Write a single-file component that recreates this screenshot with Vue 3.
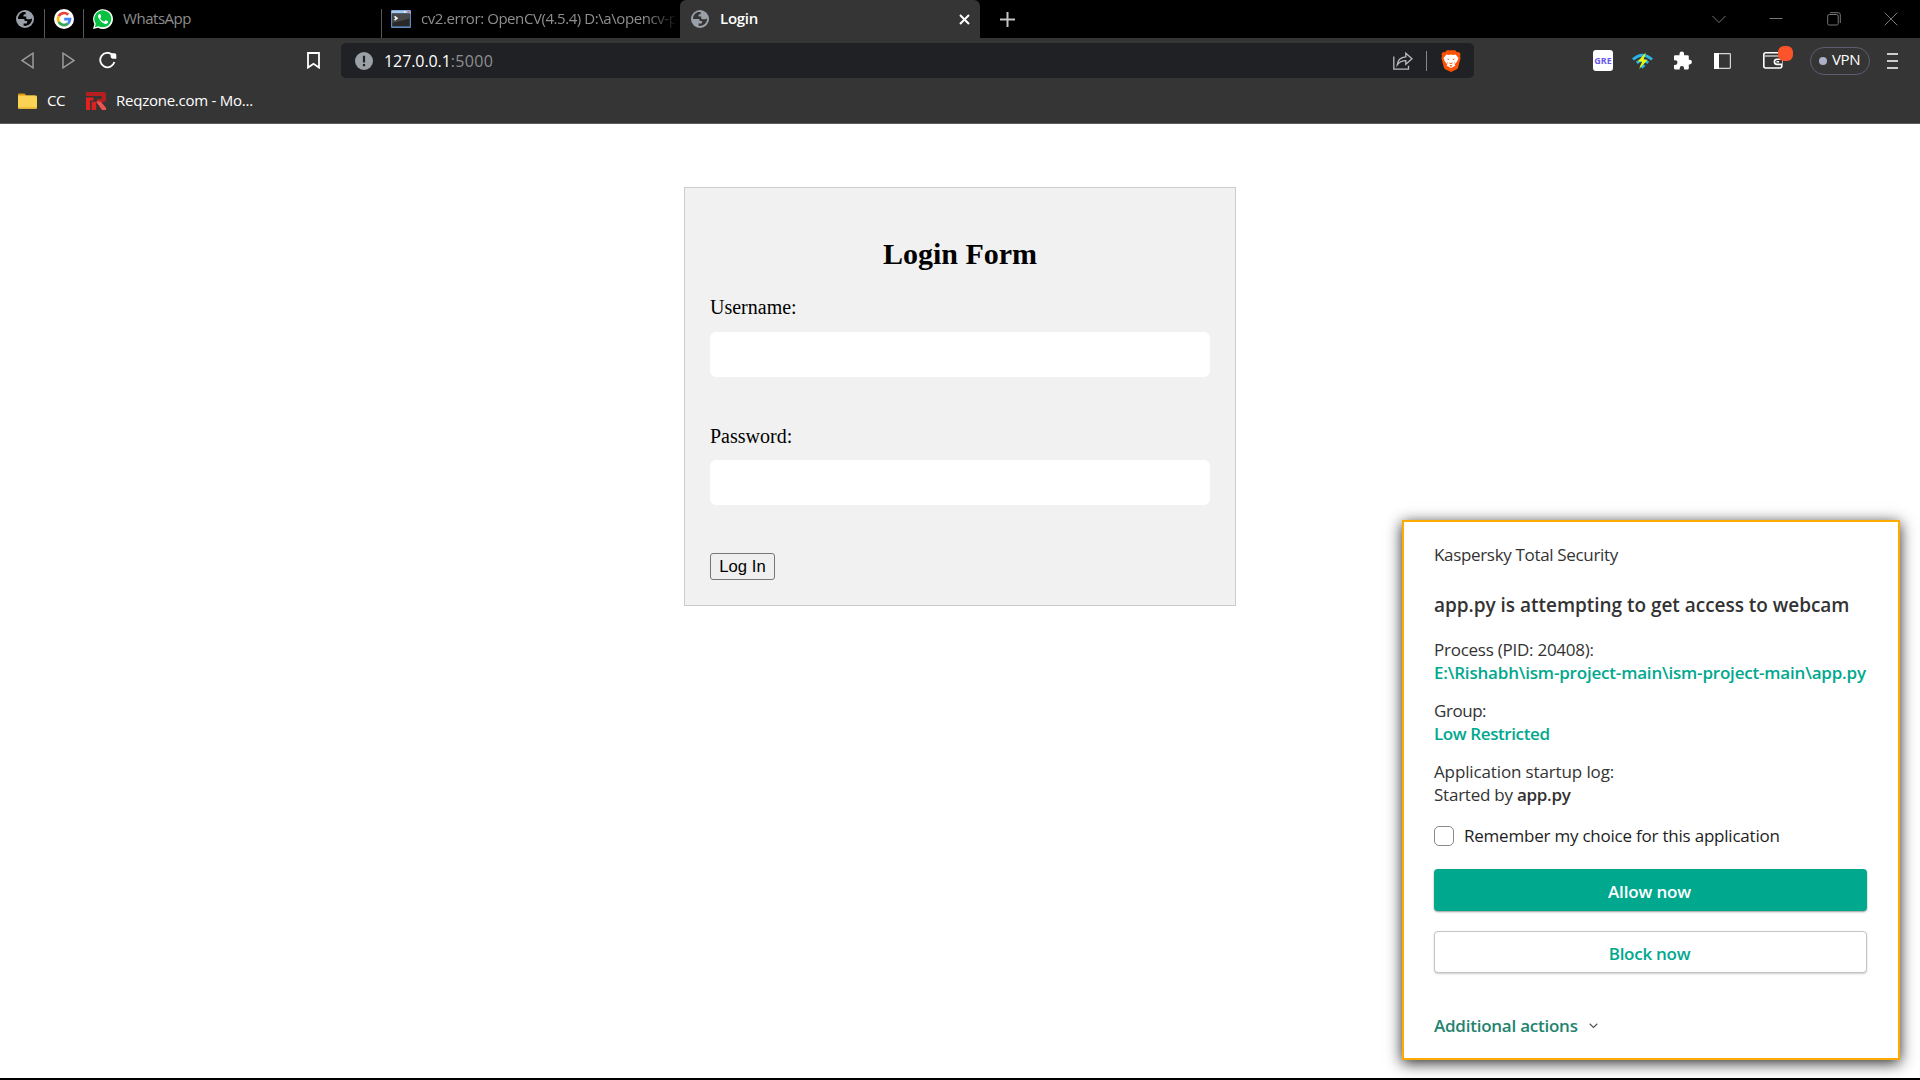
<script setup>
import { ref } from 'vue'

const username = ref('')
const password = ref('')
const remember = ref(false)
</script>

<template>
  <div class="screen">
    <svg class="defs" width="0" height="0" aria-hidden="true">
      <symbol id="globe" viewBox="0 0 18 18">
        <circle cx="9" cy="9" r="9" fill="#9aa0a9" />
        <path d="M7.400 2.100C4.200 2.800 2 5.600 2 8.900h5.200c1 0 1.400.5 1.400 1.300 0 .7.4.9 1.300.9h1.200v1.200c0 .8-.5 1.200-1.200 1.200H7.600v2.300c3.100.6 6.200-.8 7.600-3.700.7-1.400.9-2.700.7-4.200-.5 1-1.200 1.400-2.400 1.400h-1.800c-1 0-1.500-.5-1.500-1.500V6.500H7.500V5.400c0-.8.4-1.200 1.200-1.200h1V2.200c-.8-.2-1.500-.2-2.300-.1z" />
      </symbol>
    </svg>

    <header class="browser">
      <div class="tabs">
        <svg class="globe pin-globe"><use href="#globe" /></svg>
        <i class="divider d1"></i>
        <svg class="google" viewBox="0 0 20 20">
          <circle cx="10" cy="10" r="10" fill="#fff" />
          <g fill="none" stroke-width="2.7">
            <path d="M14.200 5.700A6 6 0 0 0 4.700 7.200" stroke="#ea4335" />
            <path d="M4.700 7.200A6 6 0 0 0 4.700 12.800" stroke="#fbbc05" />
            <path d="M4.700 12.800A6 6 0 0 0 13.900 14.600" stroke="#34a853" />
            <path d="M13.900 14.600A6 6 0 0 0 16 10.200H10.200" stroke="#4285f4" />
          </g>
        </svg>
        <i class="divider d2"></i>
        <svg class="whatsapp" viewBox="0 0 20 20">
          <path d="M0 20 1.400 14.900A9.900 9.900 0 1 1 5.200 18.700z" fill="#fff" />
          <path d="m1.800 18.200 1-3.500A8.500 8.500 0 1 1 5.500 17.200z" fill="#08c143" />
          <path d="M7.400 5.300c-.3-.5-.7-.5-1.100-.3-1.300 1-1.500 2.400-.7 4 1.300 2.700 3.300 4.600 6 5.700 1.500.5 2.900-.1 3.400-1.300.2-.5.200-.9-.2-1.100l-1.800-.9c-.4-.2-.6-.1-.8.2l-.7.900c-.2.2-.4.200-.7.100-1.600-.7-2.700-1.700-3.500-3.200-.1-.2-.1-.4.100-.6l.6-.8c.1-.2.100-.4 0-.7z" fill="#fff" />
        </svg>
        <span class="tab-title t-wa">WhatsApp</span>
        <i class="divider"></i>
        <svg class="console" viewBox="0 0 20 18">
          <rect width="20" height="18" rx="1" fill="#5f88c0" />
          <rect x=".5" y=".5" width="19" height="3" fill="#a9c9ef" />
          <path d="M13 1h1.500v1.500H13z" fill="#fff" /><path d="M16.500 1h2v1.500h-2z" fill="#e05a4a" />
          <rect x="1.200" y="3.600" width="17.600" height="12.800" fill="#292929" />
          <path d="M1.200 3.600h17.600v5L1.200 13z" fill="#484848" />
          <path d="m3.500 6.300 2.500 1.900-2.500 1.900" fill="none" stroke="#fff" stroke-width="1.500" />
        </svg>
        <span class="tab-title t-cv">cv2.error: OpenCV(4.5.4) D:\a\opencv-p</span>
        <div class="active-tab">
          <svg class="globe"><use href="#globe" /></svg>
          <span class="t-login">Login</span>
          <svg class="tab-close" viewBox="0 0 11 11"><path d="m1 1 9 9M10 1 1 10" stroke="#fff" stroke-width="2" /></svg>
        </div>
        <svg class="plus" viewBox="0 0 15 15"><path d="M7.500 0v15M0 7.500h15" stroke="#c4c4c4" stroke-width="2" /></svg>
        <div class="window-controls">
          <svg width="14" height="14" viewBox="0 0 14 14"><path d="m.5 4 6.500 6.500L13.500 4" /></svg>
          <svg width="14" height="14" viewBox="0 0 14 14"><path d="M.5 6.500h13" /></svg>
          <svg width="14" height="14" viewBox="0 0 14 14"><rect x=".7" y="2.500" width="10.500" height="10.500" rx="1.500" /><path d="M3 .7h8.300q2 0 2 2V11" /></svg>
          <svg width="14" height="14" viewBox="0 0 14 14"><path d="m.7.7 12.600 12.600M13.300.7.7 13.300" /></svg>
        </div>
      </div>

      <div class="toolbar">
        <svg class="back" viewBox="0 0 13 17"><path d="M12 1.200v14.600L.9 8.500z" /></svg>
        <svg class="forward" viewBox="0 0 13 17"><path d="M1 1.200v14.600l11.100-7.300z" /></svg>
        <svg class="reload" viewBox="0 0 18 17"><path d="M13.400 2.800A7.200 7.200 0 1 0 15.400 10" fill="none" stroke="#fff" stroke-width="1.800" /><path d="M11.600 1.200h4q1.700 0 1.700 1.700v3.800h-3.500q-2.200-.3-2.200-2.300z" fill="#fff" /></svg>
        <svg class="bookmark" viewBox="0 0 13 17"><path d="M1 1h11v14.600l-5.500-3.800L1 15.600z" fill="none" stroke="#fff" stroke-width="1.800" /></svg>
        <div class="address">
          <svg class="info" viewBox="0 0 18 18"><circle cx="9" cy="9" r="9" fill="#9aa0a6" /><path d="M7.900 3.800h2.200v6.700H7.900zM7.900 12h2.200v2.200H7.900z" fill="#202124" /></svg>
          <span class="host">127.0.0.1</span><span class="port">:5000</span>
          <svg class="share" viewBox="0 0 20 18"><g fill="none" stroke="#b9babc" stroke-width="1.300"><path d="M.8 4.500v12.700h14.700v-3.500" /><path d="M4.200 13c.4-4.700 3.200-7.700 8.600-8.100V1.200L19 6.700l-6.200 5.500V8.700C9 8.700 6.500 9.700 4.200 13z" /></g></svg>
          <i class="address-sep"></i>
          <svg class="brave" viewBox="0 0 20 22">
            <path d="M5.800.2h8.400l1.900 2 2-.2 1.500 2.300-.6 1.800.6 2-2.500 9.400q-.4 1.200-1.300 1.800L10 22l-5.800-2.700Q3.300 18.700 2.900 17.500L.4 8.100l.6-2-.6-1.800L1.900 2l2 .2z" fill="#fb5206" />
            <path d="M5.500 4.600 8 5l2-.5 2 .5 2.500-.4 3 3.500-1.400 3.500-2.400 2.600.6 1.500L10 18l-4.300-2.300.6-1.500-2.400-2.600-1.400-3.500z" fill="#fff" />
            <path d="m5.400 8.600 3.100.4-.6 1.100zM14.600 8.600l-3.100.4.600 1.100zM8.200 12.300l1.800.9 1.800-.9-.4 1.200-1.400.7-1.400-.7zM8.300 15.700l1.700-.8 1.700.8-1.700 1zM6.300 11.600l1 2.200-.9-.5zM13.700 11.600l-1 2.200.9-.5z" fill="#fb5206" />
          </svg>
        </div>
        <span class="gre">GRE</span>
        <svg class="wifi" viewBox="0 0 22 18">
          <path d="M1 7.500Q11-1.700 21 7.500M5 11Q11 5.500 17 11" fill="none" stroke="#2bb5e6" stroke-width="3" /><path d="M8 14q3-3 6 0l-3 3.200z" fill="#2bb5e6" />
          <path d="M14.500 0 6 9.400h4.600L7.500 17.500l9-9.700h-4.300z" fill="#eaf50c" />
        </svg>
        <svg class="puzzle" viewBox="0 0 18 19"><path d="M1.200 4.200h4.300V2.800a2.300 2.300 0 0 1 4.600 0v1.400h3.500q1.200 0 1.200 1.200v3.400h.8a2.300 2.300 0 0 1 0 4.600h-.8v3.900q0 1.200-1.200 1.200h-3.500v-1.200a2.200 2.200 0 0 0-4.400 0v1.200H1.200Q0 18.500 0 17.300v-3.400h1.200a2.300 2.300 0 0 0 0-4.600H0V5.400q0-1.200 1.200-1.200z" fill="#fff" /></svg>
        <svg class="sidebar" viewBox="0 0 17 16"><rect x=".6" y=".6" width="15.800" height="14.800" rx=".8" fill="none" stroke="#d5d5d5" stroke-width="1.200" /><path d="M0 0h5v16H0z" fill="#fff" /></svg>
        <div class="wallet-box">
          <svg class="wallet" viewBox="0 0 20 17"><g fill="none" stroke="#fff" stroke-width="1.600"><rect x=".8" y=".8" width="18" height="15.200" rx="2" /><path d="M1 4h17.500" stroke="#bbb" /><path d="M19 7.200h-5a2.600 2.600 0 0 0 0 5.200h5" fill="#353535" /></g><path d="M13.500 9h2.500v1.500h-2.500z" fill="#fff" /></svg>
          <i class="badge"></i>
        </div>
        <div class="vpn"><i></i><span>VPN</span></div>
        <svg class="menu" viewBox="0 0 11 16"><path d="M0 1h11M0 8h11M0 15h11" stroke="#fff" stroke-width="1.700" /></svg>
      </div>

      <div class="bookmarks">
        <svg class="folder" viewBox="0 0 19 16"><path d="M0 1.500Q0 .5 1 .5h5.500l1.800 2H17V10H0z" fill="#d99b16" /><rect y="2.500" width="19" height="13.200" rx="1.300" fill="#fbd253" /><path d="M0 14.200h19q-.1 1.500-1.300 1.500H1.300Q.1 15.700 0 14.200z" fill="#e9b834" /></svg>
        <span class="cc">CC</span>
        <svg class="req" viewBox="0 0 20 18"><path d="M0 0h17.500Q20 0 20 2.500V7.500Q20 10 17.500 10.200L11 10.400V6.900h4.700V4H0z" fill="#b5201f" /><path d="M0 5.400h7.500v3.200H4V18H0z" fill="#e2221f" /><path d="M5.600 9.700h4.600V18H5.600z" fill="#d9211f" /><path d="M10 9.500h4.600L20 15.700V18h-4z" fill="#f05252" /></svg>
        <span class="reqzone">Reqzone.com - Mo...</span>
      </div>
    </header>

    <main class="page">
      <form class="login" @submit.prevent>
        <h2>Login Form</h2>
        <label class="user-label" for="user">Username:</label>
        <input id="user" v-model="username" type="text" />
        <label for="pass">Password:</label>
        <input id="pass" v-model="password" type="password" />
        <button type="submit">Log In</button>
      </form>
    </main>

    <aside class="toast">
      <div class="brand">Kaspersky Total Security</div>
      <div class="title">app.py is attempting to get access to webcam</div>
      <div class="block process">
        <div class="k-process">Process (PID: 20408):</div>
        <div class="link path">E:\Rishabh\ism-project-main\ism-project-main\app.py</div>
      </div>
      <div class="block">
        <div class="k-group">Group:</div>
        <div class="link restricted">Low Restricted</div>
      </div>
      <div class="block">
        <div class="k-log">Application startup log:</div>
        <div class="started">Started by <b>app.py</b></div>
      </div>
      <label class="remember"><input v-model="remember" type="checkbox" /><span>Remember my choice for this application</span></label>
      <button class="allow" type="button">Allow now</button>
      <button class="deny" type="button">Block now</button>
      <div class="more">
        <span>Additional actions</span>
        <svg viewBox="0 0 9 6"><path d="m.7.800 3.800 3.700L8.300.8" fill="none" stroke="#555" stroke-width="1.200" /></svg>
      </div>
    </aside>
  </div>
</template>

<style>
body { margin: 0; background: #fff; overflow: hidden; }
</style>

<style scoped>
* { box-sizing: border-box; }
.screen { position: relative; display: flex; flex-direction: column; width: 1920px; height: 1080px; overflow: hidden; border-bottom: 2px solid #000; background: #fff; }
.defs { position: absolute; }
svg { display: block; flex: none; }
span { white-space: nowrap; }
.browser { height: 124px; flex: none; background: #353535; border-bottom: 1px solid #5c5c5c; font-family: "Open Sans", sans-serif; }

.tabs { display: flex; align-items: center; height: 38px; background: #000; font-size: 15px; line-height: 36px; }
.tabs span { height: 38px; }
.globe { width: 18px; height: 18px; fill: #353535; }
.pin-globe { margin-left: 16px; fill: #000; }
.divider { flex: none; width: 1px; height: 29px; align-self: flex-end; background: #585858; }
.d1 { margin-left: 10px; }
.google { width: 20px; height: 20px; margin-left: 9px; }
.d2 { margin-left: 9px; }
.whatsapp { width: 20px; height: 20px; margin-left: 9px; }
.tab-title { flex: none; color: #8e8e8e; }
.t-wa { width: 268px; padding-left: 10px; letter-spacing: -.46px; }
.console { width: 20px; height: 18px; margin-left: 9px; }
.t-cv { width: 254px; margin-left: 10px; letter-spacing: -.43px; mask-image: linear-gradient(90deg, #000 225px, transparent 258px); }
.active-tab { display: flex; align-items: center; width: 300px; height: 38px; margin-left: 5px; padding: 0 10px 0 11px; border-radius: 6px 6px 0 0; background: #353535; }
.t-login { margin-left: 11px; color: #fff; font-weight: 600; letter-spacing: -.27px; }
.tab-close { width: 11px; height: 11px; margin-left: auto; }
.plus { width: 15px; height: 15px; margin-left: 20px; }
.window-controls { display: flex; gap: 43.500px; margin-left: auto; margin-right: 22px; }
.window-controls path, .window-controls rect { fill: none; stroke: #767676; stroke-width: 1; }

.toolbar { display: flex; align-items: center; height: 45px; }
.back, .forward { width: 13px; height: 17px; fill: none; stroke: #9b9b9b; stroke-width: 1.500px; }
.back { margin-left: 21px; }
.forward { margin-left: 28px; }
.reload { width: 18px; height: 17px; margin-left: 24px; }
.bookmark { width: 13px; height: 17px; margin-left: 190px; }
.address { display: flex; align-items: center; width: 1133px; height: 35px; margin-left: 21px; border-radius: 5px; background: #202124; font-size: 16px; }
.info { width: 18px; height: 18px; margin-left: 14px; }
.host { margin-left: 11px; color: #fff; letter-spacing: -.08px; }
.port { color: #8f8f91; letter-spacing: .3px; }
.share { width: 20px; height: 18px; margin-left: auto; }
.address-sep { width: 1px; height: 20px; margin-left: 13px; background: #85868a; }
.brave { width: 20px; height: 22px; margin: 0 13px 0 14px; }
.gre { display: flex; align-items: center; justify-content: center; width: 20px; height: 21px; margin-left: 119px; border-radius: 3px; background: #fff; color: #6b57e8; font-size: 9px; font-weight: 700; }
.wifi { width: 21px; height: 18px; margin-left: 19px; }
.puzzle { width: 18px; height: 19px; margin-left: 21px; }
.sidebar { width: 17px; height: 16px; margin-left: 22px; }
.wallet-box { position: relative; width: 20px; height: 17px; margin-left: 32px; }
.wallet { width: 20px; height: 17px; }
.badge { position: absolute; top: -6px; left: 15px; width: 15px; height: 15px; border-radius: 6px; background: #fb542b; }
.vpn { display: flex; align-items: center; width: 60px; height: 28px; margin-left: 27px; padding-left: 8px; border: 1px solid #5e5e72; border-radius: 14px; color: #fff; font-size: 15px; letter-spacing: -.42px; }
.vpn i { width: 8px; height: 8px; margin-right: 5px; border-radius: 50%; background: #aeb0c8; }
.vpn span { padding-bottom: 3px; }
.menu { width: 11px; height: 16px; margin-left: 17px; }

.bookmarks { display: flex; align-items: center; height: 36px; color: #fff; font-size: 15px; }
.bookmarks span { padding-bottom: 2px; }
.folder { width: 19px; height: 16px; margin-left: 18px; }
.cc { width: 28px; margin-left: 10px; letter-spacing: -.45px; }
.req { width: 20px; height: 18px; margin-left: 11px; }
.reqzone { margin-left: 10px; letter-spacing: -.24px; }

.page { flex: 1; padding-top: 63px; }
.login { display: flex; flex-direction: column; align-items: flex-start; width: 552px; height: 419px; margin: 0 auto; padding: 25px; border: 1px solid #ccc; background: #f1f1f1; color: #000; font: 20px "Liberation Serif", "Times New Roman", serif; }
.login h2 { width: 100%; margin: 24px 0 25px; font-size: 30px; line-height: 34px; text-align: center; }
.login label { height: 35px; line-height: 23px; }
.login .user-label { height: 36px; }
.login input { width: 500px; height: 45px; margin: 0 0 48px; padding: 12px; border: 0; border-radius: 6px; background: #fff; font-size: 17px; outline: none; }
.login button { width: 65px; height: 27px; padding: 0; border: 1px solid #767676; border-radius: 3px; background: #efefef; color: #000; font: 16.670px "Liberation Sans", Arial, sans-serif; }

.toast { position: absolute; left: 1402px; top: 520px; width: 498px; height: 540px; padding: 21px 30px 0; border: 2px solid #ffaa00; background: #fff; box-shadow: 0 3px 14px rgba(0, 0, 0, .85); color: #333; font: 17px/23px "Open Sans", sans-serif; white-space: nowrap; }
.brand { letter-spacing: -.33px; }
.title { margin-top: 27px; font-size: 19px; line-height: 24px; font-weight: 600; letter-spacing: -.03px; }
.block { margin-top: 15px; }
.process { margin-top: 21px; }
.k-process { letter-spacing: -.25px; }
.link { color: #00a88e; font-weight: 600; }
.path { letter-spacing: -.190px; }
.k-group { letter-spacing: -.45px; }
.restricted { letter-spacing: -.4px; }
.k-log { letter-spacing: -.13px; }
.started { letter-spacing: -.23px; }
.started b { font-weight: 600; letter-spacing: -.32px; }
.remember { display: flex; align-items: center; height: 23px; margin-top: 18px; color: #1d1d1d; letter-spacing: -.22px; }
.remember input { appearance: none; width: 20px; height: 20px; margin: 0 10px 0 0; border: 1px solid #8a8a8a; border-radius: 5px; background: #fff; }
.allow, .deny { display: block; width: 433px; height: 42px; padding: 2px 2px 0 0; border-radius: 4px; font: 600 17px/23px "Open Sans", sans-serif; }
.allow { margin-top: 22px; border: 0; background: #00a88e; box-shadow: 0 1px 2px rgba(0, 0, 0, .4); color: #fff; letter-spacing: -.16px; }
.deny { margin-top: 20px; border: 1px solid #c4c4c4; background: #fff; box-shadow: 0 1px 2px rgba(0, 0, 0, .2); color: #00a88e; letter-spacing: -.26px; }
.more { display: flex; align-items: center; margin-top: 41px; color: #23836f; font-weight: 600; letter-spacing: -.24px; }
.more svg { width: 9px; height: 6px; margin-left: 11px; }
</style>
